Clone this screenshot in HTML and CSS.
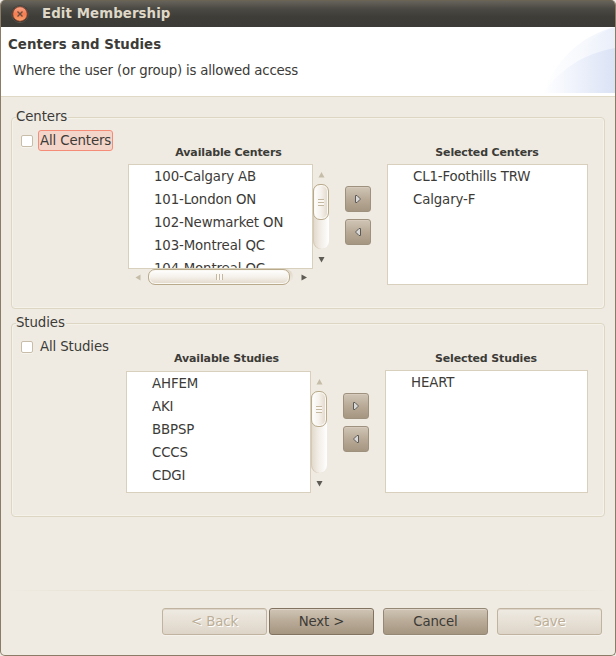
FILE: index.html
```html
<!DOCTYPE html>
<html lang="en">
<head>
<meta charset="utf-8">
<title>Edit Membership</title>
<link rel="stylesheet" href="styles.css">
</head>
<body>
<div class="window">
  <header class="titlebar">
    <svg class="close" width="18" height="18" viewBox="0 0 18 18">
      <defs><linearGradient id="cl" x1="0" y1="0" x2="0" y2="1"><stop offset="0" stop-color="#f8a78c"/><stop offset=".5" stop-color="#f47c50"/><stop offset="1" stop-color="#f9a36e"/></linearGradient></defs>
      <circle cx="9" cy="9" r="8.7" fill="#302f2b"/>
      <circle cx="9" cy="9.300" r="8.300" fill="none" stroke="#66635b" stroke-width=".7"/>
      <circle cx="9" cy="9" r="7.200" fill="url(#cl)" stroke="#98482f" stroke-width=".8"/>
      <path d="M6.500 6.500l5 5M11.500 6.500l-5 5" stroke="#6b4d40" stroke-width="1.400"/>
    </svg>
    <span class="title">Edit Membership</span>
  </header>
  <section class="banner">
    <h1>Centers and Studies</h1>
    <p>Where the user (or group) is allowed access</p>
    <svg class="swoosh" width="75" height="66" viewBox="0 0 75 66">
      <defs>
        <linearGradient id="s1" x1="0" x2="1"><stop offset="0" stop-color="#fff"/><stop offset="1" stop-color="#e7edf9"/></linearGradient>
        <linearGradient id="s2" x1="0" x2="1"><stop offset="0" stop-color="#fff"/><stop offset=".4" stop-color="#f1f4fc"/><stop offset="1" stop-color="#dae2f5"/></linearGradient>
      </defs>
      <path d="M3 66C15 34 40 9 75 0V66Z" fill="url(#s1)" opacity=".65"/>
      <path d="M24 66C30 36 50 7 75 0V66Z" fill="url(#s1)" opacity=".8"/>
      <path d="M3 66C20 43 42 27 75 21V66Z" fill="url(#s2)"/>
    </svg>
  </section>
  <main>
    <section class="group centers">
      <h2>Centers</h2>
      <label class="check focused"><i class="box"></i><span>All Centers</span></label>
      <div class="available">
        <h3>Available Centers</h3>
        <div class="scroller">
          <ul class="list"><li>100-Calgary AB</li><li>101-London ON</li><li>102-Newmarket ON</li><li>103-Montreal QC</li><li>104-Montreal QC</li></ul>
          <div class="vbar">
            <svg width="16" height="20"><path d="M5.5 13.5h6L8.5 8z" fill="#c6bda8"/></svg>
            <div class="trough"><div class="thumb"><i class="grip"></i></div></div>
            <svg width="16" height="20"><path d="M5.5 8h6L8.5 13.5z" fill="#5d5b54"/></svg>
          </div>
          <div class="hbar">
            <svg width="20" height="16"><path d="M12.5 5.5v6L7.500 8.500z" fill="#c6bda8"/></svg>
            <div class="trough"><div class="thumb"><i class="grip"></i></div></div>
            <svg width="20" height="16"><path d="M8.500 5.500v6L14 8.500z" fill="#5d5b54"/></svg>
          </div>
        </div>
      </div>
      <div class="move">
        <button><svg width="8" height="10"><path d="M1.500 1.500H3L6 4.500V5.500L3 8.500H1.500z" fill="#d9d8d6" stroke="#5b5a58"/></svg></button>
        <button><svg width="8" height="10"><path d="M6.500 1.500H5L2 4.500V5.500L5 8.500H6.500z" fill="#d9d8d6" stroke="#5b5a58"/></svg></button>
      </div>
      <div class="selected">
        <h3>Selected Centers</h3>
        <ul class="list"><li>CL1-Foothills TRW</li><li>Calgary-F</li></ul>
      </div>
    </section>
    <section class="group studies">
      <h2>Studies</h2>
      <label class="check"><i class="box"></i><span>All Studies</span></label>
      <div class="available">
        <h3>Available Studies</h3>
        <div class="scroller">
          <ul class="list"><li>AHFEM</li><li>AKI</li><li>BBPSP</li><li>CCCS</li><li>CDGI</li></ul>
          <div class="vbar">
            <svg width="16" height="20"><path d="M5.5 13.5h6L8.5 8z" fill="#c6bda8"/></svg>
            <div class="trough"><div class="thumb"><i class="grip"></i></div></div>
            <svg width="16" height="20"><path d="M5.5 8h6L8.5 13.5z" fill="#5d5b54"/></svg>
          </div>
        </div>
      </div>
      <div class="move">
        <button><svg width="8" height="10"><path d="M1.500 1.500H3L6 4.500V5.500L3 8.500H1.500z" fill="#d9d8d6" stroke="#5b5a58"/></svg></button>
        <button><svg width="8" height="10"><path d="M6.500 1.500H5L2 4.500V5.500L5 8.500H6.500z" fill="#d9d8d6" stroke="#5b5a58"/></svg></button>
      </div>
      <div class="selected">
        <h3>Selected Studies</h3>
        <ul class="list"><li>HEART</li></ul>
      </div>
    </section>
  </main>
  <footer>
    <button class="btn" disabled>&lt; Back</button>
    <button class="btn default">Next &gt;</button>
    <button class="btn cancel">Cancel</button>
    <button class="btn save" disabled>Save</button>
  </footer>
</div>
</body>
</html>
```
FILE: styles.css
```css
* { box-sizing: border-box; }
body { margin: 0; background: #efebe4; font: 13.33px/18px "DejaVu Sans", sans-serif; letter-spacing: -0.13px; color: #3c3b37; }
h1, h2, h3, p, ul { margin: 0; padding: 0; list-style: none; font-size: inherit; font-weight: normal; }
svg { display: block; }
.window { width: 616px; height: 656px; display: flex; flex-direction: column; background: #efebe3; border: 1px solid #8c7b66; border-top: 0; border-radius: 5px; overflow: hidden; }
.titlebar { flex: none; height: 27px; display: flex; align-items: center; gap: 13px; padding: 0 0 0 10px; background: linear-gradient(#65635a, #4b4943 30%, #3e3d38 60%, #3c3b37); border-top: 1px solid #6b6455; }
.title { font-weight: bold; letter-spacing: 0.09px; color: #dfd8c8; }
.banner { flex: none; position: relative; height: 70px; padding: 9px 7px 0; background: #fff; border-bottom: 1px solid #dfd9c6; }
.banner h1 { font-weight: bold; letter-spacing: 0.06px; }
.banner p { padding: 8px 5px 0; white-space: nowrap; letter-spacing: -0.195px; }
.swoosh { position: absolute; right: 0; top: 0; }
main { flex: none; padding: 20px 10px 0; height: 493px; display: flex; flex-direction: column; gap: 14px; }
.group { position: relative; width: 594px; height: 192px; border: 1px solid #ddd6c3; border-radius: 4px; box-shadow: inset 1px 1px #f5f2ea, inset -1px -1px #f5f2ea; display: grid; grid-template-columns: 116px 201px 16px 26px 16px 201px; align-items: start; }
.studies { height: 194px; grid-template-columns: 114px 201px 16px 26px 16px 203px; }
.group h2 { position: absolute; left: 4px; top: -10px; background: #efebe3; padding-right: 1px; letter-spacing: -0.1px; }
.check { display: flex; align-items: center; gap: 5px; padding: 12px 0 0 9px; }
.box { width: 12px; height: 12px; background: #fff; border: 1px solid #c8bda8; border-radius: 2px; box-shadow: 0 1px #f7f4ee; }
.check span { height: 21px; line-height: 19px; padding: 0 1px; border: 1px solid transparent; border-radius: 3px; white-space: nowrap; }
.focused span { background: #f3d5c9; border-color: #f58c77; }
.group h3 { height: 46px; padding: 26px 0 0 15px; font-size: 11px; font-weight: bold; text-align: center; letter-spacing: -0.14px; }
.group .available h3 { padding-left: 0; }
.group .selected h3 { padding: 26px 1px 0 0; }
.list { height: 121px; background: #fff; border: 1px solid #d8cfbc; overflow: hidden; }
.list li { height: 23px; line-height: 23px; padding-left: 25px; white-space: nowrap; }
.scroller { display: grid; grid-template-columns: 185px 16px; }
.centers .scroller .list { height: 105px; }
.studies .scroller .list { height: 122px; margin-top: 1px; }
.studies .selected .list { height: 123px; }
.vbar { height: 105px; display: flex; flex-direction: column; }
.studies .vbar { height: 122px; margin-top: 1px; }
.trough { flex: 1; }
.vbar svg, .hbar svg { flex: none; }
.vbar .trough { background: linear-gradient(90deg, #e0d7c9, #f1ece5 45%, #fff); border-radius: 8px; box-shadow: inset 1px 0 #d6cab7; }
.vbar .thumb { height: 36px; display: flex; align-items: center; justify-content: center; border: 1px solid #b9aa8c; border-radius: 7px; background: linear-gradient(90deg, #fff, #f5f1eb 50%, #e2d8ca); box-shadow: inset 0 0 0 1px #fbf9f4; }
.vbar .grip { width: 6px; height: 7px; background: repeating-linear-gradient(#c4b8a0 0 1px, #fbf8f3 1px 3px); }
.hbar { width: 185px; display: flex; }
.hbar .trough { background: linear-gradient(#ddd3c3, #f5f1eb); border-radius: 8px; }
.hbar .thumb { height: 16px; width: 142px; display: flex; align-items: center; justify-content: center; border: 1px solid #b9aa8c; border-radius: 7px; background: linear-gradient(#fff, #f5f1eb 50%, #e2d8ca); box-shadow: inset 0 0 0 1px #fbf9f4; }
.hbar .grip { width: 7px; height: 6px; background: repeating-linear-gradient(90deg, #c4b8a0 0 1px, #fbf8f3 1px 3px); }
.move { grid-column: 4; padding-top: 68px; display: flex; flex-direction: column; gap: 7px; }
.studies .move { padding-top: 69px; }
.selected { grid-column: 6; }
button { font: inherit; letter-spacing: inherit; color: #3c3b37; padding: 0; border: 1px solid #958875; border-radius: 3px; background: linear-gradient(#d0c5b6, #b8aa96 50%, #a59682); box-shadow: inset 0 1px #ded5c8, 0 1px #f5f2ec; }
.move button { width: 26px; height: 26px; display: flex; align-items: center; justify-content: center; border-color: #9e917e; box-shadow: inset 0 1px #d5cabb; }
footer { flex: 1; display: flex; align-items: flex-start; padding: 18px 0 0 161px; background: linear-gradient(90deg, #efebe3, #e1d9c5 30%, #e1d9c5 70%, #efebe3) top / 100% 1px no-repeat; }
.btn { width: 105px; height: 27px; line-height: 24px; }
.btn:disabled { color: #bcae97; border-color: #c0b4a0; background: linear-gradient(#efebe3, #ded5c8); text-shadow: 1px 1px #fff; }
.default { margin-left: 2px; border-color: #81735f; }
.cancel, .save { margin-left: 9px; }
```
